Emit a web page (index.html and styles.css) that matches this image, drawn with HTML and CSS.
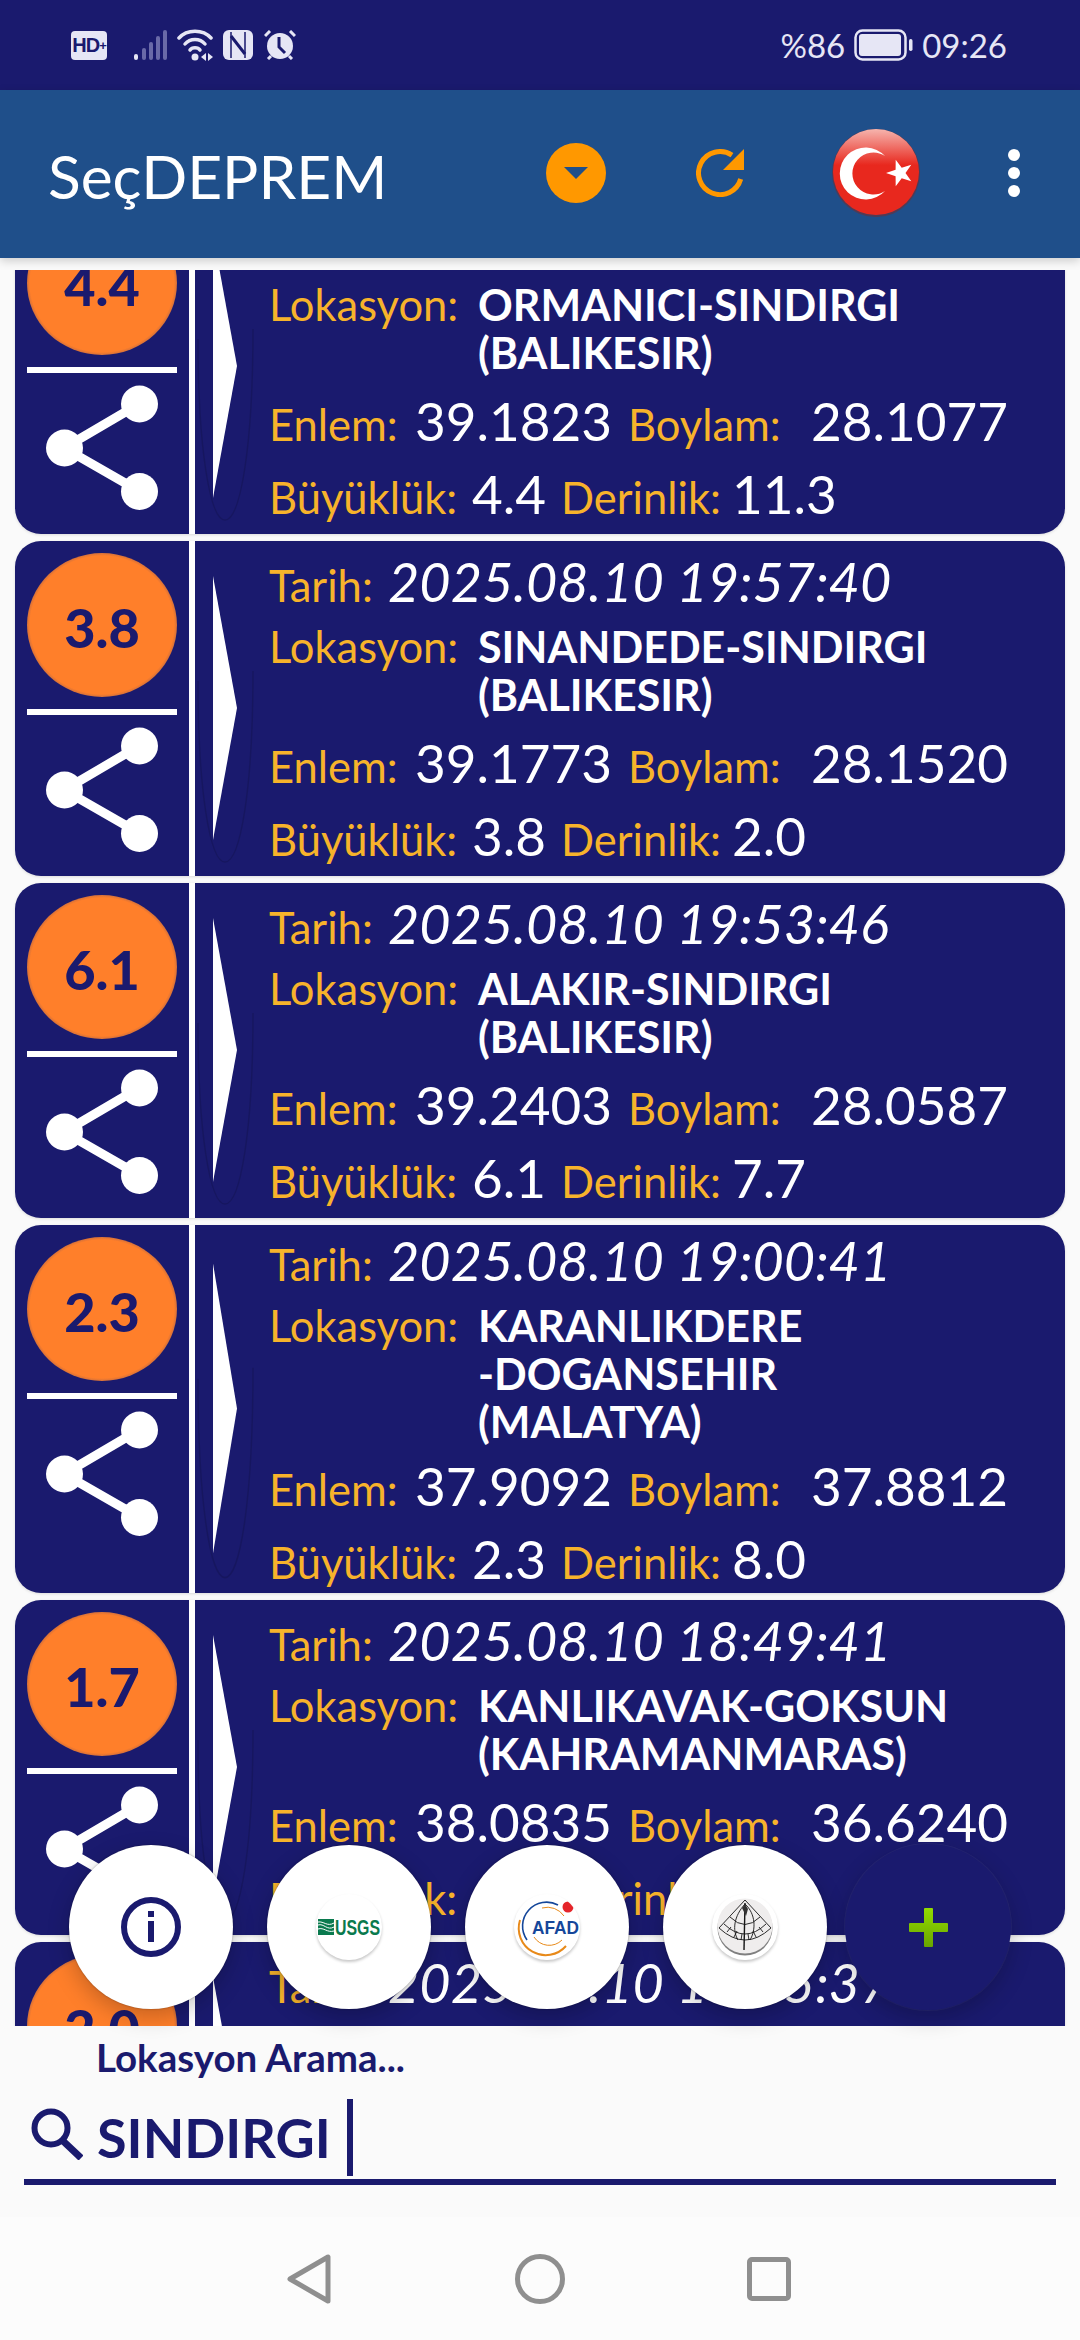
FILE: index.html
```html
<!DOCTYPE html>
<html lang="tr">
<head>
<meta charset="utf-8">
<title>SeçDEPREM</title>
<link rel="stylesheet" href="styles.css">
</head>
<body>
<svg class="defs" width="0" height="0" aria-hidden="true">
  <defs>
    <symbol id="share" viewBox="0 0 112 125">
      <path d="M93 19 18 63 93 106" fill="none" stroke="#fff" stroke-width="9"/>
      <ellipse cx="93.500" cy="19" rx="18.500" ry="18.500" fill="#fff"/>
      <ellipse cx="18.500" cy="63" rx="18.500" ry="18.500" fill="#fff"/>
      <ellipse cx="93.500" cy="106.500" rx="18.500" ry="18.500" fill="#fff"/>
    </symbol>
    <symbol id="arrow" viewBox="0 0 60 335" preserveAspectRatio="none">
      <path d="M3 140C3 250 15 321 30 321C45 321 58 250 58 130" fill="none" stroke="#000" stroke-opacity=".13" stroke-width="1.500"/>
      <path d="M18 35 42 167 18 299Z" fill="#fff"/>
    </symbol>
  </defs>
</svg>
<div class="screen">
  <header class="status">
    <div class="status-icons">
      <span class="hd">HD<small>+</small></span>
      <svg class="ic-signal" viewBox="0 0 33 30"><g fill="#6a6aa8"><rect x="8" y="18" width="4" height="12" rx="2"/><rect x="15" y="12" width="4" height="18" rx="2"/><rect x="22" y="6" width="4" height="24" rx="2"/><rect x="29" y="0" width="4" height="30" rx="2"/></g><rect x="0" y="24" width="4" height="6" rx="2" fill="#e6e6f5"/></svg>
      <svg class="ic-wifi" viewBox="0 0 36 32"><g fill="none" stroke="#e6e6f5" stroke-width="3.500" stroke-linecap="round"><path d="M2 9C10 0 26 0 34 9"/><path d="M8 15C13 9 23 9 28 15"/><path d="M13 21C15 18 21 18 23 21"/></g><circle cx="18" cy="28" r="3.500" fill="#e6e6f5"/><path d="M29 24V32L24 28ZM31 24V32L36 28Z" fill="#e6e6f5"/></svg>
      <svg class="ic-nfc" viewBox="0 0 30 30"><rect width="30" height="30" rx="6" fill="#e6e6f5"/><path d="M8 2V28M22 2V28" stroke="#1a1a6e" stroke-width="1.500"/><path d="M8 6 22 24" stroke="#1a1a6e" stroke-width="3"/></svg>
      <svg class="ic-alarm" viewBox="0 0 32 30"><circle cx="16" cy="16" r="13" fill="#e6e6f5"/><path d="M15 7V17L21 23" fill="none" stroke="#1a1a6e" stroke-width="3"/><path d="M1 6 6 1M31 6 26 1M4 29 7 26M28 29 25 26" stroke="#e6e6f5" stroke-width="3"/></svg>
    </div>
    <div class="status-right">
      <span>%86</span>
      <svg class="ic-battery" viewBox="0 0 59 32"><rect x="1.500" y="1.500" width="50" height="29" rx="7" fill="none" stroke="#e6e6f5" stroke-width="2.500"/><rect x="5" y="5" width="42" height="22" rx="3" fill="#e6e6f5"/><rect x="55" y="10" width="3.500" height="12" rx="1.700" fill="#e6e6f5"/></svg>
      <span>09:26</span>
    </div>
  </header>

  <div class="appbar">
    <div class="app-title">SeçDEPREM</div>
    <svg class="ic-down" viewBox="0 0 60 60"><circle cx="30" cy="30" r="30" fill="#ff9800"/><path d="M18 24H42L30 36Z" fill="#1f4f8a"/></svg>
    <svg class="ic-refresh" viewBox="0 0 48 48"><path d="M44.700 30A21.500 21.500 0 1 1 36 6.200" fill="none" stroke="#ff9800" stroke-width="5"/><path d="M48 0V21H27Z" fill="#ff9800"/></svg>
    <svg class="ic-flag" viewBox="0 0 88 88">
      <defs>
        <linearGradient id="gloss" x1="0" y1="0" x2="0" y2="1"><stop offset="0" stop-color="#f6b5ae"/><stop offset=".42" stop-color="#e8281e"/><stop offset="1" stop-color="#e8281e"/></linearGradient>
      </defs>
      <circle cx="44" cy="44" r="44" fill="#7a2a2a" opacity=".55"/>
      <circle cx="44" cy="43" r="43" fill="url(#gloss)"/>
      <path d="M53 27A26 26 0 1 0 53 62A21 21 0 1 1 53 27Z" fill="#fff"/>
      <path d="M54 44 63.600 40.800 63.700 30.700 69.700 38.800 79.300 35.800 73.500 44 79.300 52.200 69.700 49.200 63.700 57.300 63.600 47.200Z" fill="#fff"/>
    </svg>
    <div class="dots"><i></i><i></i><i></i></div>
  </div>

  <main class="list-view">
    <div class="list">

      <article class="card first">
        <div class="side">
          <div class="mag">4.4</div>
          <div class="rule"></div>
          <svg class="share"><use href="#share"/></svg>
        </div>
        <div class="stripe"></div>
        <svg class="arrow"><use href="#arrow" width="100%" height="100%"/></svg>
        <div class="info">
          <div class="row r-date"></div>
          <div class="row r-loc r-loc-1"><span class="k k-loc">Lokasyon:</span><span class="place">ORMANICI-SINDIRGI<br>(BALIKESIR)</span></div>
          <div class="row r-pos"><span class="k k-lat">Enlem:</span><span class="v v-lat">39.1823</span><span class="k k-lon">Boylam:</span><span class="v">28.1077</span></div>
          <div class="row r-size"><span class="k k-mag">Büyüklük:</span><span class="v v-mag">4.4</span><span class="k k-dep">Derinlik:</span><span class="v">11.3</span></div>
        </div>
      </article>

      <article class="card">
        <div class="side">
          <div class="mag">3.8</div>
          <div class="rule"></div>
          <svg class="share"><use href="#share"/></svg>
        </div>
        <div class="stripe"></div>
        <svg class="arrow"><use href="#arrow" width="100%" height="100%"/></svg>
        <div class="info">
          <div class="row r-date"><span class="k k-date">Tarih:</span><em class="v">2025.08.10 19:57:40</em></div>
          <div class="row r-loc"><span class="k k-loc">Lokasyon:</span><span class="place">SINANDEDE-SINDIRGI<br>(BALIKESIR)</span></div>
          <div class="row r-pos"><span class="k k-lat">Enlem:</span><span class="v v-lat">39.1773</span><span class="k k-lon">Boylam:</span><span class="v">28.1520</span></div>
          <div class="row r-size"><span class="k k-mag">Büyüklük:</span><span class="v v-mag">3.8</span><span class="k k-dep">Derinlik:</span><span class="v">2.0</span></div>
        </div>
      </article>

      <article class="card">
        <div class="side">
          <div class="mag">6.1</div>
          <div class="rule"></div>
          <svg class="share"><use href="#share"/></svg>
        </div>
        <div class="stripe"></div>
        <svg class="arrow"><use href="#arrow" width="100%" height="100%"/></svg>
        <div class="info">
          <div class="row r-date"><span class="k k-date">Tarih:</span><em class="v">2025.08.10 19:53:46</em></div>
          <div class="row r-loc"><span class="k k-loc">Lokasyon:</span><span class="place">ALAKIR-SINDIRGI<br>(BALIKESIR)</span></div>
          <div class="row r-pos"><span class="k k-lat">Enlem:</span><span class="v v-lat">39.2403</span><span class="k k-lon">Boylam:</span><span class="v">28.0587</span></div>
          <div class="row r-size"><span class="k k-mag">Büyüklük:</span><span class="v v-mag">6.1</span><span class="k k-dep">Derinlik:</span><span class="v">7.7</span></div>
        </div>
      </article>

      <article class="card tall">
        <div class="side">
          <div class="mag">2.3</div>
          <div class="rule"></div>
          <svg class="share"><use href="#share"/></svg>
        </div>
        <div class="stripe"></div>
        <svg class="arrow"><use href="#arrow" width="100%" height="100%"/></svg>
        <div class="info">
          <div class="row r-date"><span class="k k-date">Tarih:</span><em class="v">2025.08.10 19:00:41</em></div>
          <div class="row r-loc"><span class="k k-loc">Lokasyon:</span><span class="place">KARANLIKDERE<br>-DOGANSEHIR<br>(MALATYA)</span></div>
          <div class="row r-pos"><span class="k k-lat">Enlem:</span><span class="v v-lat">37.9092</span><span class="k k-lon">Boylam:</span><span class="v">37.8812</span></div>
          <div class="row r-size"><span class="k k-mag">Büyüklük:</span><span class="v v-mag">2.3</span><span class="k k-dep">Derinlik:</span><span class="v">8.0</span></div>
        </div>
      </article>

      <article class="card">
        <div class="side">
          <div class="mag">1.7</div>
          <div class="rule"></div>
          <svg class="share"><use href="#share"/></svg>
        </div>
        <div class="stripe"></div>
        <svg class="arrow"><use href="#arrow" width="100%" height="100%"/></svg>
        <div class="info">
          <div class="row r-date"><span class="k k-date">Tarih:</span><em class="v">2025.08.10 18:49:41</em></div>
          <div class="row r-loc"><span class="k k-loc">Lokasyon:</span><span class="place">KANLIKAVAK-GOKSUN<br>(KAHRAMANMARAS)</span></div>
          <div class="row r-pos"><span class="k k-lat">Enlem:</span><span class="v v-lat">38.0835</span><span class="k k-lon">Boylam:</span><span class="v">36.6240</span></div>
          <div class="row r-size"><span class="k k-mag">Büyüklük:</span><span class="v v-mag">1.7</span><span class="k k-dep">Derinlik:</span><span class="v"></span></div>
        </div>
      </article>

      <article class="card">
        <div class="side">
          <div class="mag">2.0</div>
          <div class="rule"></div>
          <svg class="share"><use href="#share"/></svg>
        </div>
        <div class="stripe"></div>
        <svg class="arrow"><use href="#arrow" width="100%" height="100%"/></svg>
        <div class="info">
          <div class="row r-date"><span class="k k-date">Tarih:</span><em class="v">2025.08.10 18:05:37</em></div>
        </div>
      </article>

    </div>
  </main>

  <div class="fabs">
    <button class="fab">
      <svg class="ic-info" viewBox="0 0 60 60"><circle cx="30" cy="30" r="27" fill="none" stroke="#1a1a6e" stroke-width="6"/><rect x="27" y="14" width="6" height="6" fill="#1a1a6e"/><rect x="27" y="24" width="6" height="21" fill="#1a1a6e"/></svg>
    </button>
    <button class="fab">
      <svg class="logo" viewBox="0 0 66 66">
        <circle cx="33" cy="33" r="32.500" fill="#fff"/>
        <rect x="2" y="25" width="16" height="16" fill="#0a7a4e"/>
        <path d="M2 31C8 29 11 37 18 33M2 35C8 33 11 39 18 37M2 28C8 27 11 33 18 29" fill="none" stroke="#fff" stroke-width="1"/>
        <text x="19" y="41" class="usgs" textLength="45" lengthAdjust="spacingAndGlyphs">USGS</text>
      </svg>
    </button>
    <button class="fab">
      <svg class="logo" viewBox="0 0 66 66">
        <circle cx="33" cy="33" r="32.500" fill="#fff"/>
        <path d="M52 52A27 27 0 0 1 6 26" fill="none" stroke="#e88a1a" stroke-width="2"/>
        <path d="M13 46A24 24 0 0 1 44 11" fill="none" stroke="#15479a" stroke-width="1.600"/>
        <path d="M20 43A18 18 0 0 0 48 46" fill="none" stroke="#e88a1a" stroke-width="1"/>
        <path d="M28 14A20 20 0 0 1 50 22" fill="none" stroke="#e88a1a" stroke-width="1"/>
        <circle cx="54" cy="13" r="5.500" fill="#e5252a"/>
        <text x="18" y="40" class="afad" textLength="47" lengthAdjust="spacingAndGlyphs">AFAD</text>
      </svg>
    </button>
    <button class="fab">
      <svg class="logo" viewBox="0 0 66 66">
        <circle cx="33" cy="33" r="32.500" fill="#fff"/>
        <circle cx="33" cy="34" r="27.500" fill="#7f7f7f"/>
        <circle cx="33" cy="32" r="27.500" fill="#efeded"/>
        <g fill="none" stroke="#161616" stroke-width=".9">
          <path d="M33 6 7 34Q33 58 59 34Z"/>
          <path d="M12 30Q33 50 54 30M18 23Q33 38 48 23"/>
          <path d="M15 38 19 33M22 43 25 37M29 46 30 40M37 46 36 40M44 43 41 37M51 38 47 33"/>
          <path d="M33 10C22 22 20 36 26 46M33 10C44 20 44 36 38 46"/>
        </g>
        <path d="M33 9 32 56" stroke="#161616" stroke-width="1.400"/>
        <path d="M30 14 33 10 36 15 34 22Z" fill="#333"/>
      </svg>
    </button>
    <button class="fab fab-main">
      <svg class="ic-plus" viewBox="0 0 39 39">
        <defs><linearGradient id="pl" x1="0" y1="0" x2="0" y2="1"><stop offset="0" stop-color="#92dc00"/><stop offset="1" stop-color="#69a500"/></linearGradient></defs>
        <path d="M15 1Q15 0 16 0H23Q24 0 24 1V15H38Q39 15 39 16V23Q39 24 38 24H24V38Q24 39 23 39H16Q15 39 15 38V24H1Q0 24 0 23V16Q0 15 1 15H15Z" fill="url(#pl)"/>
      </svg>
    </button>
  </div>

  <section class="search">
    <div class="search-label">Lokasyon Arama...</div>
    <div class="search-field">
      <svg class="ic-search" viewBox="0 0 52 52"><circle cx="20" cy="20" r="16.500" fill="none" stroke="#1a1a6e" stroke-width="6"/><path d="M31 32 50 50" stroke="#1a1a6e" stroke-width="7"/></svg>
      <span class="search-text">SINDIRGI</span>
      <span class="caret"></span>
    </div>
  </section>

  <nav class="navbar">
    <svg class="nav-back" viewBox="0 0 44 50"><path d="M41 3V47L3 25Z" fill="none" stroke="#8f8f8f" stroke-width="5" stroke-linejoin="round"/></svg>
    <svg class="nav-home" viewBox="0 0 50 50"><circle cx="25" cy="25" r="22.500" fill="none" stroke="#8f8f8f" stroke-width="5"/></svg>
    <svg class="nav-recent" viewBox="0 0 44 44"><rect x="2.500" y="2.500" width="39" height="39" rx="2.500" fill="none" stroke="#8f8f8f" stroke-width="5"/></svg>
  </nav>
</div>
</body>
</html>
```
FILE: styles.css
```css
* { box-sizing: border-box; }
html, body { margin: 0; padding: 0; }
body { width: 1080px; height: 2340px; overflow: hidden; font-family: Lato, "Noto Sans", sans-serif; background: #fafafa; }
.defs { position: absolute; }
.screen { position: relative; width: 1080px; height: 2340px; display: flex; flex-direction: column; background: #fafafa; overflow: hidden; }

/* status bar */
.status { height: 90px; flex: none; background: #1a1a6e; display: flex; justify-content: space-between; align-items: center; padding: 0 73px 0 71px; color: #e6e6f5; }
.status-icons { display: flex; align-items: center; }
.hd { width: 36px; height: 29px; background: #e6e6f5; border-radius: 4px; color: #1a1a6e; font: 700 20px/29px "Liberation Sans", sans-serif; text-align: center; letter-spacing: -1px; }
.hd small { font-size: 13px; vertical-align: 2px; }
.ic-signal { width: 33px; height: 30px; margin-left: 27px; }
.ic-wifi { width: 36px; height: 32px; margin-left: 10px; }
.ic-nfc { width: 30px; height: 30px; margin-left: 10px; }
.ic-alarm { width: 32px; height: 30px; margin-left: 11px; }
.status-right { display: flex; align-items: center; font-size: 33px; font-weight: 400; gap: 9px; }
.ic-battery { width: 59px; height: 32px; }

/* app bar */
.appbar { height: 168px; flex: none; background: #1f4f8a; display: flex; align-items: center; padding-left: 48px; box-shadow: 0 3px 9px rgba(0, 0, 0, .18); position: relative; z-index: 2; }
.app-title { width: 498px; font-size: 60.500px; color: #fff; font-weight: 400; margin-top: 3px; }
.ic-down { width: 60px; height: 60px; margin-top: -2px; }
.ic-refresh { width: 48px; height: 48px; margin-left: 90px; margin-top: -2px; }
.ic-flag { width: 88px; height: 88px; margin-left: 88px; margin-top: -2px; }
.dots { margin-left: 88px; margin-top: -2px; display: flex; flex-direction: column; gap: 6px; }
.dots i { display: block; width: 12px; height: 12px; border-radius: 50%; background: #fff; }

/* list */
.list-view { flex: none; height: 1756px; margin-top: 12px; overflow: hidden; padding: 0 15px; }
.list { margin-top: -71px; display: flex; flex-direction: column; gap: 7px; }
.card { flex: none; height: 335px; display: flex; background: #1a1a6e; border-radius: 26px; overflow: hidden; box-shadow: 0 1px 3px rgba(0, 0, 0, .12); }
.card.tall { height: 368px; }
.side { width: 174px; flex: none; padding: 12px 12px 0; display: flex; flex-direction: column; }
.mag { height: 144px; flex: none; border-radius: 50%; padding-top: 4px; background: radial-gradient(closest-side, #ff7f2a 96%, #d4703a 100%); color: #1a1a6e; font-weight: 900; font-size: 54px; display: flex; align-items: center; justify-content: center; }
.rule { height: 6px; flex: none; margin-top: 12px; background: #fff; }
.share { width: 112px; height: 125px; flex: none; margin: 12px 0 0 19px; }
.stripe { width: 6px; flex: none; background: #fff; }
.arrow { width: 60px; flex: none; height: 100%; }
.info { flex: 1; padding: 11px 0 0 14px; display: flex; flex-direction: column; min-width: 0; }
.card.tall .info { padding-top: 6px; }
.row { display: flex; align-items: baseline; white-space: nowrap; flex: none; }
.k { color: #f7b32b; font-size: 43.500px; font-weight: 400; }
.v { color: #fff; font-size: 53px; font-weight: 400; }
em.v { font-style: italic; font-size: 54px; }
.place { color: #fff; font-size: 43px; font-weight: 700; line-height: 48px; }
.r-date { height: 60px; line-height: 60px; }
.r-loc { margin-top: 10px; line-height: 48px; }
.r-pos { margin-top: 14px; height: 60px; line-height: 60px; }
.card.tall .r-pos { margin-top: 10px; }
.r-size { margin-top: 13px; height: 60px; line-height: 60px; }
.k-date { width: 119px; }
.k-loc { width: 209px; }
.k-lat { width: 146px; }
.v-lat { width: 213px; }
.k-lon { width: 183px; }
.k-mag { width: 203px; }
.v-mag { width: 89px; }
.k-dep { width: 171px; }

/* floating buttons */
.fabs { position: absolute; left: 69px; top: 1845px; display: flex; gap: 34px; z-index: 3; }
.fab { width: 164px; height: 164px; padding: 0; border: 0; border-radius: 50%; background: #fff; display: flex; align-items: center; justify-content: center; box-shadow: 0 8px 22px rgba(0, 0, 0, .22), 0 0 2px rgba(0, 0, 0, .35); }
.fab-main { width: 166px; height: 166px; margin-left: -16px; margin-top: -1px; background: #1a1a6e; box-shadow: 0 8px 22px rgba(0, 0, 0, .22), 0 0 0 1px rgba(255, 255, 255, .05); }
.ic-info { width: 60px; height: 60px; }
.logo { width: 66px; height: 66px; border-radius: 50%; box-shadow: 0 2px 3px rgba(0, 0, 0, .22); }
.usgs { font: 700 22px "Liberation Sans", sans-serif; fill: #0a7a4e; }
.afad { font: 700 19px "Liberation Sans", sans-serif; fill: #15479a; }
.ic-plus { width: 39px; height: 39px; }

/* search */
.search { flex: none; height: 191px; padding: 0 24px; display: flex; flex-direction: column; }
.search-label { color: #1a1a6e; font-size: 38.500px; font-weight: 700; margin: 8px 0 0 72px; height: 46px; line-height: 46px; }
.search-field { height: 86px; margin-top: 19px; border-bottom: 6px solid #1a1a6e; display: flex; align-items: flex-start; }
.ic-search { width: 52px; height: 52px; margin: 9px 0 0 7px; flex: none; }
.search-text { color: #1a1a6e; font-size: 54px; font-weight: 700; margin-left: 14px; line-height: 78px; }
.caret { width: 6px; height: 77px; background: #1a1a6e; margin-left: 16px; }

/* nav */
.navbar { flex: 1; background: #fcfcfc; display: flex; align-items: flex-start; padding: 37px 0 0 287px; }
.nav-back { width: 44px; height: 50px; }
.nav-home { width: 50px; height: 50px; margin-left: 184px; }
.nav-recent { width: 44px; height: 44px; margin: 3px 0 0 182px; }
```
